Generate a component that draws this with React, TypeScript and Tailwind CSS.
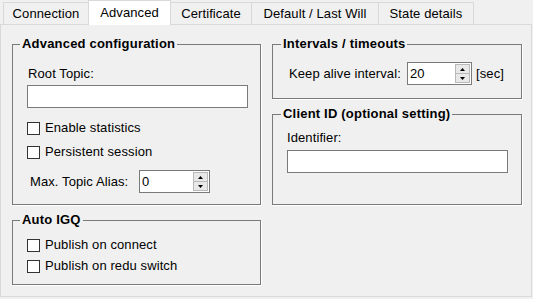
import React from "react";

const tabs = [
  { label: "Connection", width: "w-[86px]" },
  { label: "Advanced", width: "w-[83px]", active: true },
  { label: "Certificate", width: "w-[82px]" },
  { label: "Default / Last Will", width: "w-[128px]" },
  { label: "State details", width: "w-[96px]" },
];

const Arrow: React.FC<{ up?: boolean }> = ({ up }) => (
  <svg width="5" height="3" viewBox="0 0 5 3">
    {up ? <path d="M2.5 0 L5 3 L0 3 Z" fill="#000" /> : <path d="M0 0 L5 0 L2.5 3 Z" fill="#000" />}
  </svg>
);

const Spinner: React.FC<{ value: string; width: string }> = ({ value, width }) => (
  <div className={`flex h-[23px] ${width} border border-[#7a7a7a] bg-white`}>
    <div className="flex-1 pl-[2px] leading-[21px]">{value}</div>
    <div className="my-[1px] mr-[1px] flex w-[15px] flex-col">
      <div className="flex h-[10px] items-center justify-center border border-[#b9b9b9] bg-[#e8e8e8]">
        <Arrow up />
      </div>
      <div className="-mt-px flex h-[10px] items-center justify-center border border-[#b9b9b9] bg-[#e8e8e8]">
        <Arrow />
      </div>
    </div>
  </div>
);

const Check: React.FC<{ label: string; className?: string }> = ({ label, className }) => (
  <label className={`ml-[7px] flex h-[16px] items-center gap-[5px] ${className ?? ""}`}>
    <span className="h-[13px] w-[13px] border border-[#333333] bg-white" />
    <span>{label}</span>
  </label>
);

const Group: React.FC<{ title: string; className: string; children: React.ReactNode }> = ({
  title,
  className,
  children,
}) => (
  <fieldset className={`flex flex-col border border-[#7a7a7a] pl-[7px] shadow-[1px_1px_0_#ffffff] ${className}`}>
    <legend className="px-[2px] text-[13px] font-bold leading-[16px] tracking-[0.2px]">{title}</legend>
    {children}
  </fieldset>
);

export default function App() {
  return (
    <div className="h-[299px] w-[533px] bg-[#f0f0f0] font-['Liberation_Sans',Arial,sans-serif] text-[13px] leading-[16px] tracking-[0.1px] text-black">
      <div className="flex h-[24px] items-end pl-[3px]">
        {tabs.map((t, i) =>
          t.active ? (
            <div
              key={t.label}
              className={`relative z-10 -mb-px -ml-px flex h-[25px] ${t.width} items-center justify-center border border-b-0 border-[#d9d9d9] bg-white pb-[1px]`}
            >
              {t.label}
            </div>
          ) : (
            <div
              key={t.label}
              className={`flex h-[22px] ${t.width} ${i > 0 ? "-ml-px" : ""} items-center justify-center border border-b-0 border-[#d9d9d9] bg-[#f0f0f0] pt-[1px]`}
            >
              {t.label}
            </div>
          )
        )}
      </div>

      <div className="grid h-[273px] w-[532px] grid-cols-[249px_250px] gap-x-[11px] border border-[#d9d9d9] pl-[11px] pt-[11px]">
        <div className="flex flex-col gap-[7px]">
          <Group title="Advanced configuration" className="h-[169px]">
            <div className="ml-[8px] mt-[14px]">Root Topic:</div>
            <input
              readOnly
              className="ml-[7px] mt-[3px] h-[23px] w-[221px] border border-[#7a7a7a] bg-white outline-none"
            />
            <Check label="Enable statistics" className="mt-[12px]" />
            <Check label="Persistent session" className="mt-[8px]" />
            <div className="mt-[10px] flex items-center">
              <span className="ml-[10px] w-[109px]">Max. Topic Alias:</span>
              <Spinner value="0" width="w-[71px]" />
            </div>
          </Group>
          <Group title="Auto IGQ" className="h-[73px]">
            <Check label="Publish on connect" className="mt-[9px]" />
            <Check label="Publish on redu switch" className="mt-[5px]" />
          </Group>
        </div>

        <div className="flex flex-col gap-[7px]">
          <Group title="Intervals / timeouts" className="h-[63px] pl-[8px]">
            <div className="mt-[10px] flex items-center">
              <span className="ml-[8px] w-[118px]">Keep alive interval:</span>
              <Spinner value="20" width="w-[65px]" />
              <span className="ml-[4px]">[sec]</span>
            </div>
          </Group>
          <Group title="Client ID (optional setting)" className="h-[99px] pl-[8px]">
            <div className="ml-[6px] mt-[8px]">Identifier:</div>
            <input
              readOnly
              className="ml-[6px] mt-[4px] h-[23px] w-[221px] border border-[#7a7a7a] bg-white outline-none"
            />
          </Group>
        </div>
      </div>
    </div>
  );
}
